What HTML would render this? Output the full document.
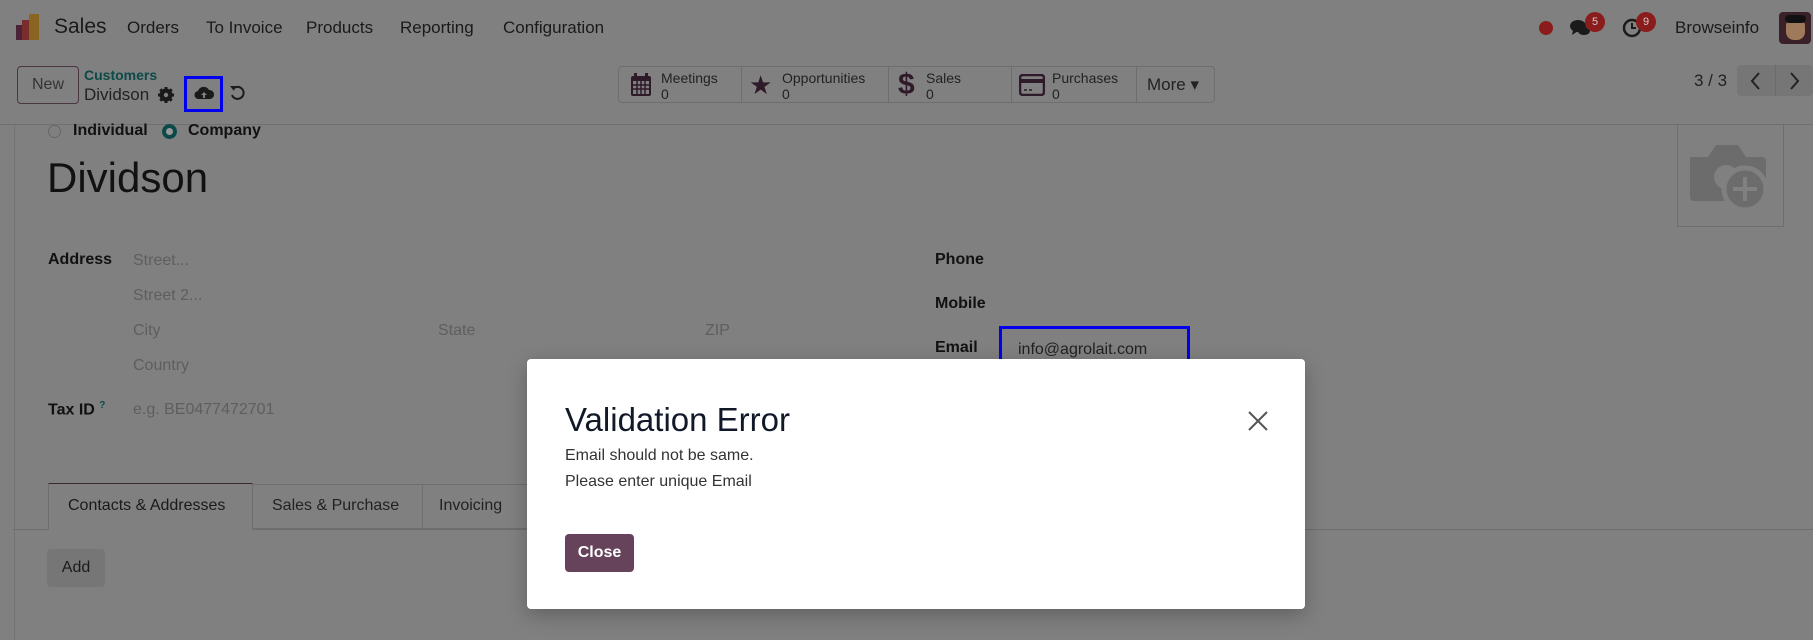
<!DOCTYPE html>
<html><head><meta charset="utf-8"><style>
*{box-sizing:border-box;margin:0;padding:0}
body{width:1813px;height:640px;overflow:hidden;background:#808080;font-family:"Liberation Sans",sans-serif;color:#111;position:relative}
.a{position:absolute;white-space:nowrap}
.nav{font-size:17px;color:#1a1a1a}
.ph{color:#5e5e5e;font-size:16px}
.lb{font-weight:bold;font-size:16px;color:#111}
.sb{position:absolute;top:66px;height:37px;border:1px solid #6e6e6e;border-radius:4px;left:618px;width:597px}
.sbd{position:absolute;top:0;bottom:0;width:1px;background:#6e6e6e}
.st{position:absolute;font-size:14px;line-height:16px;color:#222}
</style></head><body>
<!-- navbar -->
<svg class="a" style="left:16px;top:14px" width="26" height="28"><rect x="0" y="11" width="10" height="15" fill="#4a2436"/><rect x="6" y="6" width="10" height="20" fill="#7a2d2d"/><rect x="13" y="0" width="10" height="26" fill="#8a6522"/></svg>
<div class="a" style="left:54px;top:15px;font-size:21px;color:#1a1a1a">Sales</div>
<div class="a nav" style="left:127px;top:18px">Orders</div>
<div class="a nav" style="left:206px;top:18px">To Invoice</div>
<div class="a nav" style="left:306px;top:18px">Products</div>
<div class="a nav" style="left:400px;top:18px">Reporting</div>
<div class="a nav" style="left:503px;top:18px">Configuration</div>
<div class="a" style="left:1539px;top:21px;width:14px;height:14px;border-radius:50%;background:#8a1c1c"></div>
<svg class="a" style="left:1569px;top:17px" width="24" height="22"><ellipse cx="9" cy="9" rx="8" ry="6" fill="#1a1a1a"/><path d="M4 13 L3 18 L9 14Z" fill="#1a1a1a"/><ellipse cx="15" cy="14" rx="6" ry="4" fill="#1a1a1a"/></svg>
<div class="a" style="left:1585px;top:12px;width:20px;height:20px;border-radius:50%;background:#8a1c1c;color:#ccc;font-size:11px;text-align:center;line-height:20px">5</div>
<svg class="a" style="left:1622px;top:17px" width="22" height="22"><circle cx="10" cy="11" r="8" fill="none" stroke="#1a1a1a" stroke-width="2.5"/><path d="M10 6V11H14" stroke="#1a1a1a" stroke-width="2" fill="none"/></svg>
<div class="a" style="left:1636px;top:12px;width:20px;height:20px;border-radius:50%;background:#8a1c1c;color:#ccc;font-size:11px;text-align:center;line-height:20px">9</div>
<div class="a nav" style="left:1675px;top:18px">Browseinfo</div>
<div class="a" style="left:1779px;top:12px;width:32px;height:32px;border-radius:4px;background:#3a2028;overflow:hidden"><div style="position:absolute;left:7px;top:6px;width:19px;height:22px;border-radius:8px;background:#9e7a5a"></div><div style="position:absolute;left:6px;top:3px;width:21px;height:8px;background:#111;border-radius:4px"></div></div>
<!-- control panel -->
<div class="a" style="left:17px;top:66px;width:62px;height:38px;border:1px solid #4a3542;border-radius:4px;font-size:16px;text-align:center;line-height:36px;color:#333">New</div>
<div class="a" style="left:84px;top:67px;font-size:14px;font-weight:bold;color:#0c4a48">Customers</div>
<div class="a" style="left:84px;top:85px;font-size:17px;color:#222">Dividson</div>
<svg class="a" style="left:158px;top:87px" width="16" height="16"><circle cx="8" cy="8" r="5" fill="none" stroke="#1a1a1a" stroke-width="3"/><path d="M8 0V16M0 8H16M2.3 2.3L13.7 13.7M13.7 2.3L2.3 13.7" stroke="#1a1a1a" stroke-width="3"/><circle cx="8" cy="8" r="2.2" fill="#808080"/></svg>
<div class="a" style="left:184px;top:76px;width:39px;height:36px;border:3px solid #0000ee"></div>
<svg class="a" style="left:194px;top:85px" width="20" height="16"><path d="M5 14 A4 4 0 0 1 4 6 A6 6 0 0 1 15 5 A4.5 4.5 0 0 1 16 14Z" fill="#1a1a1a"/><path d="M10 7 L7 10 H9 V13 H11 V10 H13Z" fill="#808080"/></svg>
<svg class="a" style="left:229px;top:84px" width="18" height="18"><path d="M4 5 A6 6 0 1 1 3 11" fill="none" stroke="#1a1a1a" stroke-width="2"/><path d="M1 2 L6 2 L5 7Z" fill="#1a1a1a"/></svg>
<div class="sb"><div class="sbd" style="left:122px"></div><div class="sbd" style="left:269px"></div><div class="sbd" style="left:392px"></div><div class="sbd" style="left:517px"></div></div>
<svg class="a" style="left:630px;top:72px" width="22" height="26"><rect x="1" y="4" width="20" height="20" rx="2" fill="#2e1a28"/><rect x="3" y="9" width="16" height="13" fill="#808080"/><path d="M3 13H19M3 17H19M7 9V22M11 9V22M15 9V22" stroke="#2e1a28" stroke-width="1.5"/><rect x="4" y="1" width="3" height="6" fill="#2e1a28"/><rect x="15" y="1" width="3" height="6" fill="#2e1a28"/></svg>
<div class="st" style="left:661px;top:70px">Meetings<br>0</div>
<div class="a" style="left:749px;top:70px;font-size:26px;color:#2e1a28">★</div>
<div class="st" style="left:782px;top:70px">Opportunities<br>0</div>
<div class="a" style="left:898px;top:68px;font-size:30px;font-weight:bold;color:#2e1a28">$</div>
<div class="st" style="left:926px;top:70px">Sales<br>0</div>
<svg class="a" style="left:1019px;top:74px" width="26" height="22"><rect x="1" y="1" width="24" height="20" rx="3" fill="none" stroke="#2e1a28" stroke-width="2.5"/><rect x="1" y="5" width="24" height="4" fill="#2e1a28"/><path d="M5 16H8M10 16H13" stroke="#2e1a28" stroke-width="1.5"/></svg>
<div class="st" style="left:1052px;top:70px">Purchases<br>0</div>
<div class="a" style="left:1147px;top:75px;font-size:17px;color:#222">More ▾</div>
<div class="a" style="left:1694px;top:71px;font-size:17px;color:#222">3 / 3</div>
<div class="a" style="left:1737px;top:65px;width:76px;height:31px;background:#767676;border-radius:4px"></div>
<div class="a" style="left:1775px;top:65px;width:1px;height:31px;background:#6b6b6b"></div>
<svg class="a" style="left:1749px;top:71px" width="14" height="20"><path d="M10 2L3 10L10 18" fill="none" stroke="#222" stroke-width="2"/></svg>
<svg class="a" style="left:1787px;top:71px" width="14" height="20"><path d="M4 2L11 10L4 18" fill="none" stroke="#222" stroke-width="2"/></svg>
<div class="a" style="left:0;top:124px;width:1813px;height:1px;background:#707070"></div>
<div class="a" style="left:14px;top:125px;width:1px;height:515px;background:#727272"></div>
<!-- form -->
<div class="a" style="left:48px;top:125px;width:13px;height:13px;border-radius:50%;border:1px solid #666"></div>
<div class="a lb" style="left:73px;top:122px">Individual</div>
<div class="a" style="left:162px;top:124px;width:15px;height:15px;border-radius:50%;border:4px solid #0c4a48;background:#999"></div>
<div class="a lb" style="left:188px;top:122px">Company</div>
<div class="a" style="left:47px;top:154px;font-size:42px;color:#111">Dividson</div>
<div class="a" style="left:1677px;top:125px;width:107px;height:102px;border:1px solid #6e6e6e;border-top:none"></div>
<svg class="a" style="left:1686px;top:137px" width="84" height="76"><path d="M4 20 H22 L30 8 H52 L60 20 H76 A4 4 0 0 1 80 24 V60 A4 4 0 0 1 76 64 H8 A4 4 0 0 1 4 60Z" fill="#6c6c6c"/><circle cx="40" cy="40" r="12" fill="#808080"/><circle cx="59" cy="52" r="21" fill="#6c6c6c" stroke="#808080" stroke-width="5"/><path d="M59 40V64M47 52H71" stroke="#808080" stroke-width="4"/></svg>
<div class="a lb" style="left:48px;top:251px">Address</div>
<div class="a ph" style="left:133px;top:252px">Street...</div>
<div class="a ph" style="left:133px;top:287px">Street 2...</div>
<div class="a ph" style="left:133px;top:322px">City</div>
<div class="a ph" style="left:438px;top:322px">State</div>
<div class="a ph" style="left:705px;top:322px">ZIP</div>
<div class="a ph" style="left:133px;top:357px">Country</div>
<div class="a lb" style="left:48px;top:400px">Tax ID <sup style="font-size:10px;color:#0c4a48">?</sup></div>
<div class="a ph" style="left:133px;top:401px">e.g. BE0477472701</div>
<div class="a lb" style="left:935px;top:251px">Phone</div>
<div class="a lb" style="left:935px;top:295px">Mobile</div>
<div class="a lb" style="left:935px;top:339px">Email</div>
<div class="a" style="left:1018px;top:341px;font-size:16px;color:#222">info@agrolait.com</div>
<div class="a" style="left:999px;top:326px;width:191px;height:51px;border:3px solid #0000ee"></div>
<!-- tabs -->
<div class="a" style="left:13px;top:529px;width:1800px;height:1px;background:#6e6e6e"></div>
<div class="a" style="left:48px;top:483px;width:205px;height:47px;border:1px solid #6e6e6e;border-top:1px solid #3a2a30;border-bottom:1px solid #808080;background:#808080"></div>
<div class="a" style="left:252px;top:484px;width:171px;height:45px;border:1px solid #6e6e6e"></div>
<div class="a" style="left:422px;top:484px;width:110px;height:45px;border:1px solid #6e6e6e"></div>
<div class="a" style="left:68px;top:497px;font-size:16px;color:#1a1a1a">Contacts &amp; Addresses</div>
<div class="a" style="left:272px;top:497px;font-size:16px;color:#222">Sales &amp; Purchase</div>
<div class="a" style="left:439px;top:497px;font-size:16px;color:#222">Invoicing</div>
<div class="a" style="left:47px;top:549px;width:58px;height:38px;background:#767676;border-radius:4px;font-size:16px;text-align:center;line-height:38px;color:#1a1a1a">Add</div>
<!-- dialog -->
<div class="a" style="left:527px;top:359px;width:778px;height:250px;background:#fff;border-radius:4px;box-shadow:0 6px 20px rgba(0,0,0,.25)"></div>
<div class="a" style="left:565px;top:401px;font-size:33px;color:#111827">Validation Error</div>
<svg class="a" style="left:1248px;top:411px" width="20" height="20"><path d="M1 1L19 19M19 1L1 19" stroke="#555" stroke-width="2"/></svg>
<div class="a" style="left:565px;top:447px;font-size:16px;color:#333">Email should not be same.</div>
<div class="a" style="left:565px;top:473px;font-size:16px;color:#333">Please enter unique Email</div>
<div class="a" style="left:565px;top:534px;width:69px;height:38px;background:#66435a;border-radius:4px;color:#fff;font-size:16px;font-weight:bold;text-align:center;line-height:38px">Close</div>
</body></html>
